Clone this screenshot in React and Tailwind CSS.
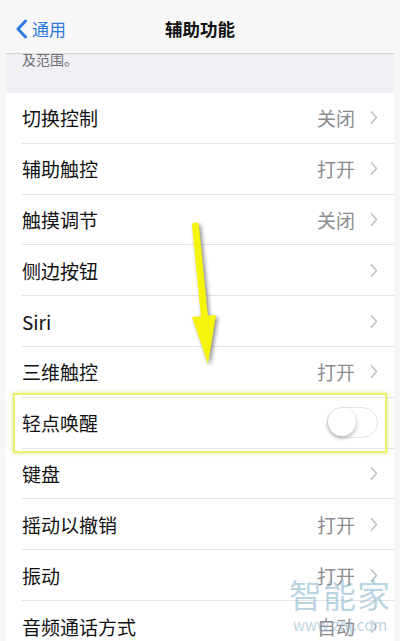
import React from "react";

const rows = [
  { label: "切换控制", value: "关闭" },
  { label: "辅助触控", value: "打开" },
  { label: "触摸调节", value: "关闭" },
  { label: "侧边按钮", value: "" },
  { label: "Siri", value: "" },
  { label: "三维触控", value: "打开" },
  { label: "轻点唤醒", toggle: true },
  { label: "键盘", value: "" },
  { label: "摇动以撤销", value: "打开" },
  { label: "振动", value: "打开" },
  { label: "音频通话方式", value: "自动" },
];

function Chevron() {
  return (
    <svg width="8" height="13" viewBox="0 0 8 13" fill="none">
      <path d="M1.5 1 L6.5 6.5 L1.5 12" stroke="#c4c4c9" strokeWidth="1.8" strokeLinecap="round" strokeLinejoin="round" />
    </svg>
  );
}

function Row({ label, value, toggle, last }) {
  return (
    <div className="h-[50.8px] flex pl-[16px]">
      <div className={`flex-1 flex items-center pr-[16px] ${last ? "" : "border-b border-[#e2e2e6]"}`}>
        <span className="text-[19px] text-[#111] flex-1 leading-none">{label}</span>
        {toggle ? (
          <div className="w-[51px] h-[31px] rounded-full border-[1.5px] border-[#e3e3e6] bg-white relative">
            <div className="absolute left-0 top-0 w-[28px] h-[28px] rounded-full bg-white shadow-[0_2px_4px_rgba(0,0,0,0.3)]" />
          </div>
        ) : (
          <div className="flex items-center gap-[15px]">
            {value && <span className="text-[19px] text-[#8c8c90] leading-none">{value}</span>}
            <Chevron />
          </div>
        )}
      </div>
    </div>
  );
}

export default function App() {
  return (
    <div
      className="w-[400px] h-[641px] overflow-hidden bg-[#f6f6f7] relative pt-[5px] px-[6px]"
      style={{ fontFamily: '"Noto Sans CJK SC", "Noto Sans", sans-serif' }}
    >
      {/* Nav bar */}
      <div className="h-[49px] bg-[#f7f7f8] border-b border-[#d6d6d9] flex items-center relative z-10 -mx-[1px]">
        <div className="flex items-center pl-[10px] gap-[4px] text-[#2e7ae0]">
          <svg width="13" height="20" viewBox="0 0 13 20" fill="none">
            <path d="M10.5 2 L3 10 L10.5 18" stroke="#2e7ae0" strokeWidth="3" strokeLinecap="round" strokeLinejoin="round" />
          </svg>
          <span className="text-[17px]">通用</span>
        </div>
        <div className="absolute inset-0 flex items-center justify-center pointer-events-none">
          <span className="text-[17.5px] font-semibold text-[#111]">辅助功能</span>
        </div>
      </div>

      {/* Footer text of previous group */}
      <div className="h-[39px] bg-[#efeff4] overflow-hidden pl-[16px]">
        <p className="text-[14px] text-[#6d6d72] leading-none -mt-[2px]">及范围。</p>
      </div>

      {/* List */}
      <div className="bg-white">
        {rows.map((r, i) => (
          <Row key={r.label} {...r} last={i === rows.length - 1} />
        ))}
      </div>

      {/* Highlight box */}
      <div className="absolute left-[13px] top-[393px] w-[374px] h-[60px] border-2 border-[#eef06a] shadow-[0_0_4px_rgba(200,200,60,0.6)] pointer-events-none" />

      {/* Arrow */}
      <svg className="absolute left-0 top-0 pointer-events-none" width="400" height="641" style={{ filter: "drop-shadow(2px 2px 2px rgba(0,0,0,0.45))" }}>
        <line x1="195.5" y1="226" x2="205" y2="322" stroke="#f4f40c" strokeWidth="7" strokeLinecap="round" />
        <polygon points="192,317 216,315 208,364" fill="#f4f40c" />
      </svg>

      {/* Watermark */}
      <div className="absolute left-[289px] top-[578px] w-[102px] flex flex-col items-center pointer-events-none text-[rgba(120,170,195,0.5)]">
        <span className="text-[33px] leading-none tracking-[1px]">智能家</span>
        <span className="text-[15px] leading-none mt-[6px] tracking-[0px]">www.znj.com</span>
      </div>
    </div>
  );
}
